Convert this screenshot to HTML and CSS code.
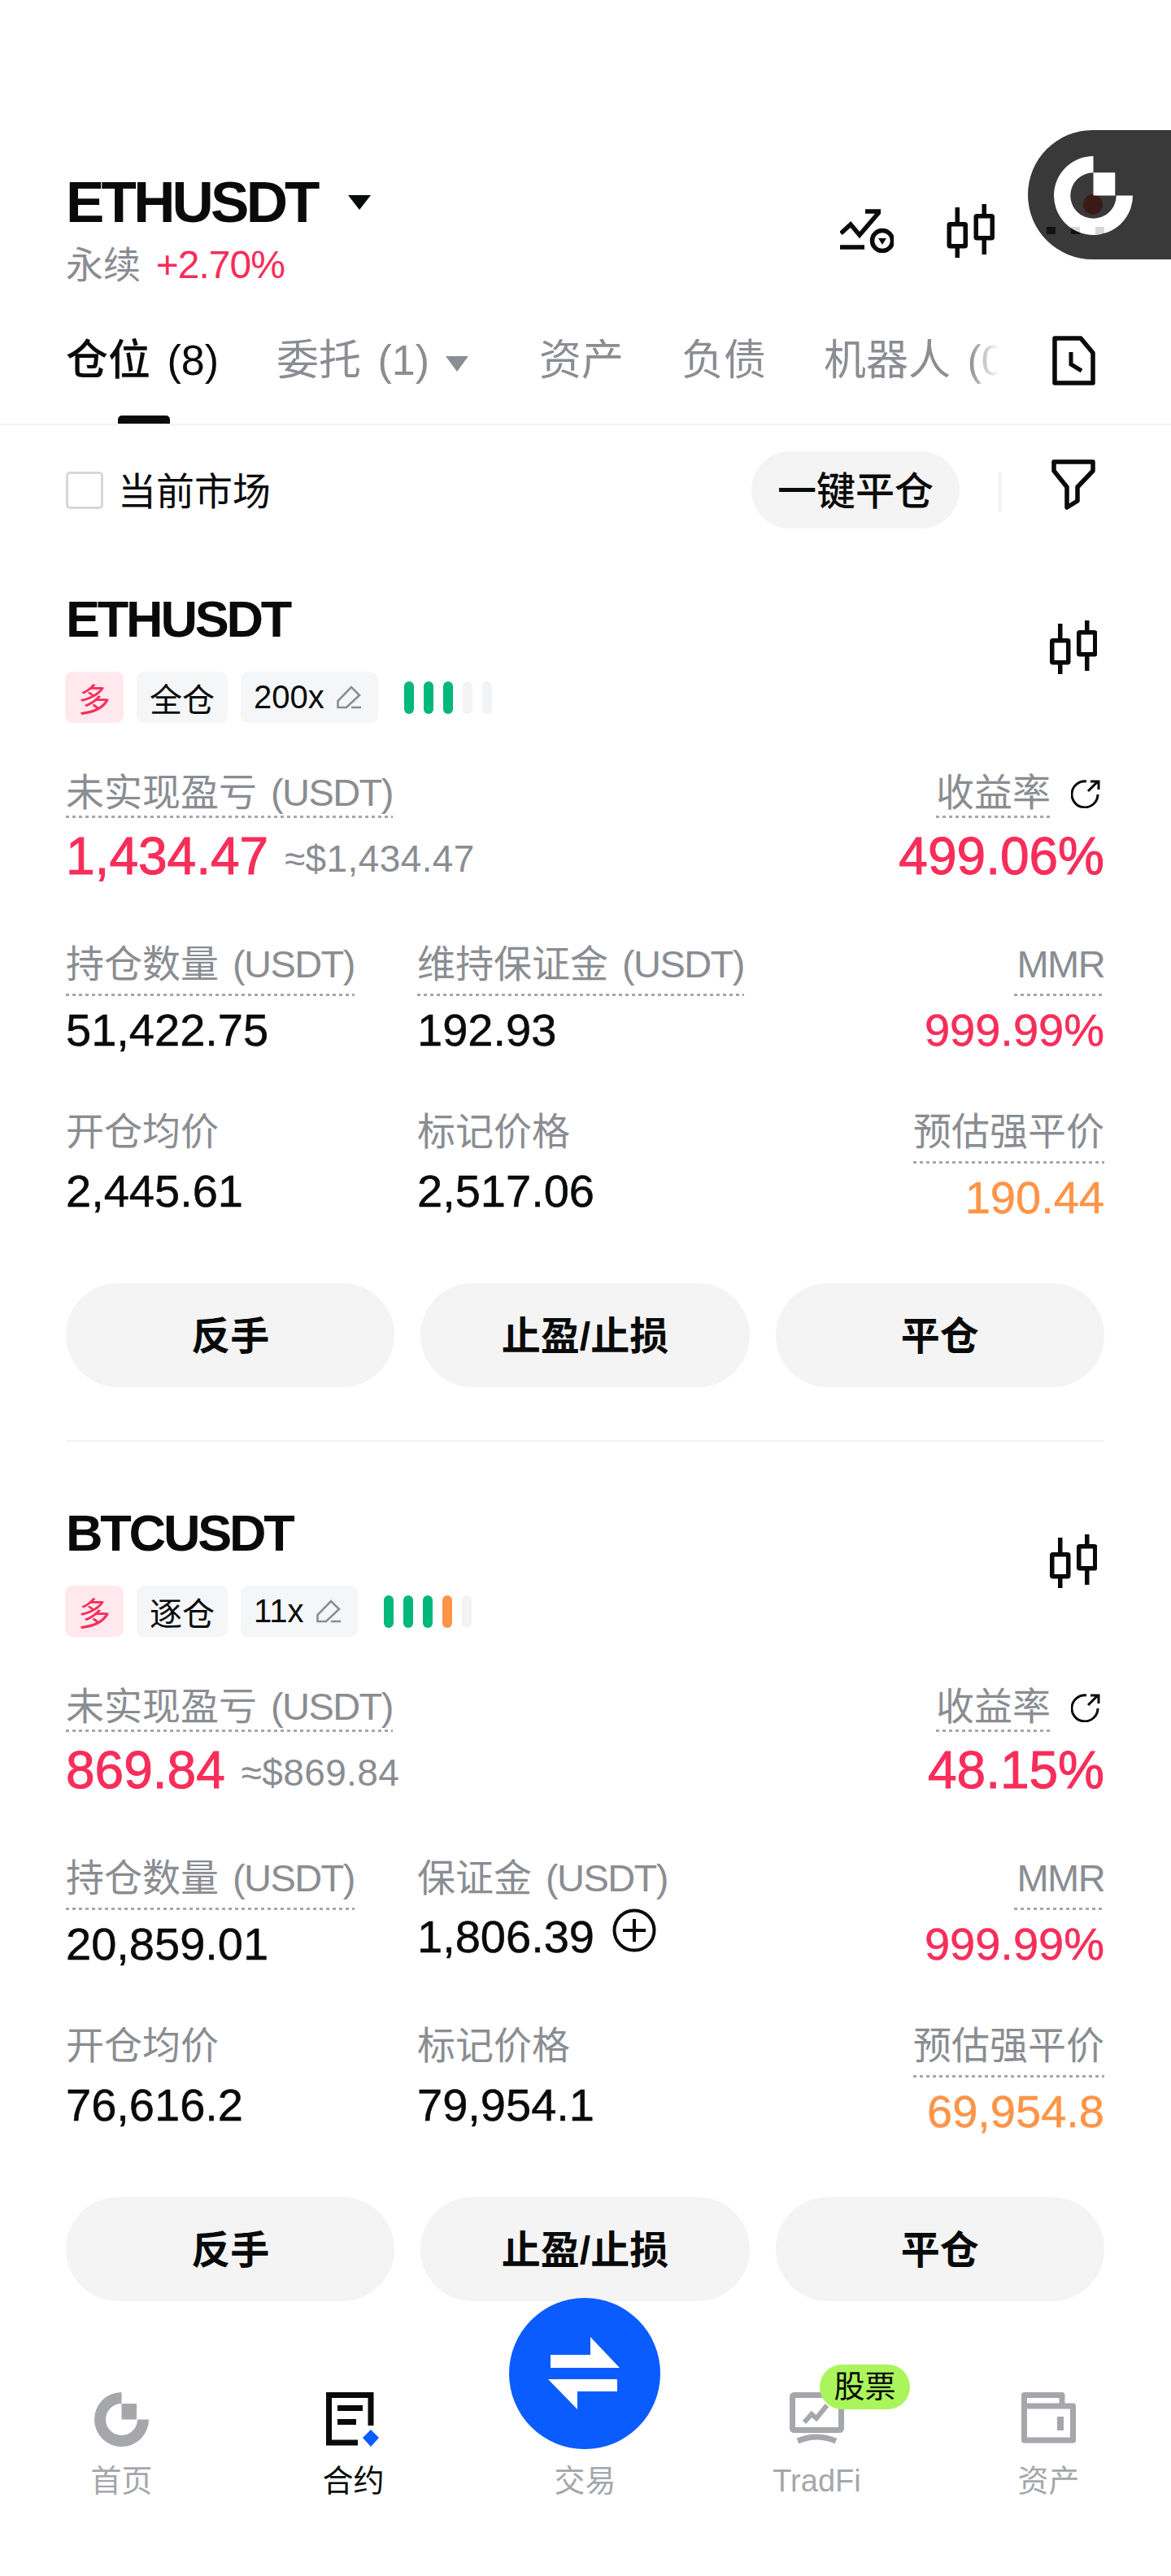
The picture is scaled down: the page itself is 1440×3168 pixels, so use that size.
FILE: index.html
```html
<!DOCTYPE html>
<html lang="zh-CN">

<head>
    <meta charset="UTF-8">
    <meta name="viewport" content="width=device-width, initial-scale=1.0">
    <title>ETHUSDT 仓位</title>
    <link rel="stylesheet" href="styles.css">
</head>

<body>
    <svg class="defs" width="0" height="0">
        <defs>
            <symbol id="candles" viewBox="0 0 58 66">
                <g fill="none" stroke="currentColor" stroke-width="5.5">
                    <rect x="2.75" y="24.75" width="20" height="27" rx="1"/>
                    <rect x="35.75" y="14.75" width="20" height="27" rx="1"/>
                    <path d="M12.75 4v20M12.75 52v14M45.75 0v14M45.75 42v20"/>
                </g>
            </symbol>
            <symbol id="logo" viewBox="0 0 67 67">
                <path fill="currentColor" d="M33.5 0A33.5 33.5 0 1 0 67 33.5H53A19.5 19.5 0 1 1 33.5 14ZM33.5 14H52V33.5H33.5Z"/>
            </symbol>
            <symbol id="pencil" viewBox="0 0 30 30">
                <path fill="none" stroke="currentColor" stroke-width="2.6" d="M1.5 27V19L18 2 28 12 12 27ZM18 27H30"/>
            </symbol>
            <symbol id="share" viewBox="0 0 36 36">
                <path fill="none" stroke="currentColor" stroke-width="3" d="M19 3A16 16 0 1 0 33 19M21 15 33 3M24 3H34V13"/>
            </symbol>
        </defs>
    </svg>

    <div class="page">
        <header class="market">
            <div class="market-top">
                <div>
                    <div class="market-name">
                        <h1>ETHUSDT</h1>
                        <span class="caret caret-lg"></span>
                    </div>
                    <div class="market-sub">永续 <span class="red">+2.70%</span></div>
                </div>
                <div class="market-tools">
                    <svg class="tool-chart" viewBox="0 0 66 54">
                        <g fill="none" stroke="currentColor" stroke-width="5.5">
                            <path d="M1 30 13 19 24 32 48 4M31 3H50M0 47H30"/>
                            <circle cx="52" cy="39" r="12.5"/>
                        </g>
                        <path fill="currentColor" d="M47 36H57L52 44Z"/>
                    </svg>
                    <svg class="tool-candles"><use href="#candles"/></svg>
                    <div class="tool-more"><i></i><i></i><i></i></div>
                </div>
            </div>
        </header>

        <!-- floating assistant button, the toolbar shows through it -->
        <span class="float-dot"></span>
        <div class="float-btn">
            <svg class="float-logo"><use href="#logo"/></svg>
        </div>

        <nav class="tabs">
            <div class="tabs-scroll">
                <span class="tab active">仓位 <em>(8)</em></span>
                <span class="tab tab-drop">委托 <em>(1)</em><span class="caret caret-sm"></span></span>
                <span class="tab">资产</span>
                <span class="tab">负债</span>
                <span class="tab">机器人 <em>(0)</em></span>
            </div>
            <svg class="tab-doc" viewBox="0 0 53 61">
                <path fill="none" stroke="currentColor" stroke-width="5.5" stroke-linejoin="round" d="M3 3H35L50 21V58H3Z"/>
                <path fill="none" stroke="currentColor" stroke-width="5" d="M23 20V35L36 43"/>
            </svg>
        </nav>

        <div class="filter-row">
            <label class="check"><span class="check-box"></span><span class="check-text">当前市场</span></label>
            <div class="filter-right">
                <button class="close-all">一键平仓</button>
                <span class="filter-sep"></span>
                <svg class="filter-icon" viewBox="0 0 54 62">
                    <path fill="none" stroke="currentColor" stroke-width="5.5" stroke-linejoin="round" d="M3 3H51V14L32 34V51L19 59V34L3 14Z"/>
                </svg>
            </div>
        </div>

        <section class="position">
            <div class="pos-head">
                <div>
                    <h2>ETHUSDT</h2>
                    <div class="tags">
                        <span class="tag tag-long">多</span>
                        <span class="tag">全仓</span>
                        <span class="tag">200x<svg class="pencil"><use href="#pencil"/></svg></span>
                        <div class="risk">
                            <i class="g"></i><i class="g"></i><i class="g"></i><i></i><i></i>
                        </div>
                    </div>
                </div>
                <svg class="pos-candles"><use href="#candles"/></svg>
            </div>

            <div class="pnl">
                <div>
                    <div class="lbl dotted pnl-lbl">未实现盈亏 <em>(USDT)</em></div>
                    <div class="pnl-val"><span class="red">1,434.47</span> <small>≈$1,434.47</small></div>
                </div>
                <div class="right">
                    <div class="pnl-rate"><span class="lbl dotted pnl-lbl">收益率</span><svg class="share"><use href="#share"/></svg></div>
                    <div class="pnl-val red">499.06%</div>
                </div>
            </div>

            <div class="stats">
                <div>
                    <div class="lbl dotted">持仓数量 <em>(USDT)</em></div>
                    <div class="val">51,422.75</div>
                </div>
                <div>
                    <div class="lbl dotted">维持保证金 <em>(USDT)</em></div>
                    <div class="val">192.93</div>
                </div>
                <div class="right">
                    <div class="lbl dotted"><em>MMR</em></div>
                    <div class="val red">999.99%</div>
                </div>
                <div class="row3">
                    <div class="lbl">开仓均价</div>
                    <div class="val">2,445.61</div>
                </div>
                <div class="row3">
                    <div class="lbl">标记价格</div>
                    <div class="val">2,517.06</div>
                </div>
                <div class="right row3">
                    <div class="lbl dotted">预估强平价</div>
                    <div class="val orange">190.44</div>
                </div>
            </div>

            <div class="actions">
                <button>反手</button>
                <button>止盈/止损</button>
                <button>平仓</button>
            </div>
        </section>

        <section class="position">
            <div class="pos-head">
                <div>
                    <h2>BTCUSDT</h2>
                    <div class="tags">
                        <span class="tag tag-long">多</span>
                        <span class="tag">逐仓</span>
                        <span class="tag">11x<svg class="pencil"><use href="#pencil"/></svg></span>
                        <div class="risk">
                            <i class="g"></i><i class="g"></i><i class="g"></i><i class="o"></i><i></i>
                        </div>
                    </div>
                </div>
                <svg class="pos-candles"><use href="#candles"/></svg>
            </div>

            <div class="pnl">
                <div>
                    <div class="lbl dotted pnl-lbl">未实现盈亏 <em>(USDT)</em></div>
                    <div class="pnl-val"><span class="red">869.84</span> <small>≈$869.84</small></div>
                </div>
                <div class="right">
                    <div class="pnl-rate"><span class="lbl dotted pnl-lbl">收益率</span><svg class="share"><use href="#share"/></svg></div>
                    <div class="pnl-val red">48.15%</div>
                </div>
            </div>

            <div class="stats">
                <div>
                    <div class="lbl dotted">持仓数量 <em>(USDT)</em></div>
                    <div class="val">20,859.01</div>
                </div>
                <div>
                    <div class="lbl">保证金 <em>(USDT)</em></div>
                    <div class="val val-margin">1,806.39
                        <svg class="plus" viewBox="0 0 54 54">
                            <g fill="none" stroke="currentColor" stroke-width="4">
                                <circle cx="27" cy="27" r="24.5"/>
                                <path d="M27 13V41M13 27H41"/>
                            </g>
                        </svg>
                    </div>
                </div>
                <div class="right">
                    <div class="lbl dotted"><em>MMR</em></div>
                    <div class="val red">999.99%</div>
                </div>
                <div class="row3">
                    <div class="lbl">开仓均价</div>
                    <div class="val">76,616.2</div>
                </div>
                <div class="row3">
                    <div class="lbl">标记价格</div>
                    <div class="val">79,954.1</div>
                </div>
                <div class="right row3">
                    <div class="lbl dotted">预估强平价</div>
                    <div class="val orange">69,954.8</div>
                </div>
            </div>

            <div class="actions">
                <button>反手</button>
                <button>止盈/止损</button>
                <button>平仓</button>
            </div>
        </section>

        <footer class="bottom-nav">
            <div class="nav-item">
                <svg class="nav-icon"><use href="#logo"/></svg>
                <span>首页</span>
            </div>
            <div class="nav-item active">
                <svg class="nav-icon" viewBox="0 0 67 67">
                    <path fill="none" stroke="currentColor" stroke-width="7" d="M39 62H3.5V3.500H55V41"/>
                    <path fill="currentColor" d="M14 16H45V23H14ZM14 33H37V40H14Z"/>
                    <path fill="#0a5cff" d="M55 46 65 56 55 67 45 56Z"/>
                </svg>
                <span>合约</span>
            </div>
            <div class="nav-item">
                <button class="trade-btn">
                    <svg viewBox="0 0 90 90">
                        <path fill="#fff" d="M3 22H52V0L88 38H3ZM0 52H85V67H36V89Z"/>
                    </svg>
                </button>
                <span class="nav-spacer"></span>
                <span>交易</span>
            </div>
            <div class="nav-item">
                <span class="nav-badge">股票</span>
                <svg class="nav-icon" viewBox="0 0 67 67">
                    <rect x="3.500" y="3.500" width="60" height="43" rx="2" fill="none" stroke="currentColor" stroke-width="7"/>
                    <path fill="none" stroke="currentColor" stroke-width="7" d="M10 60Q33 50 57 60"/>
                    <path fill="none" stroke="currentColor" stroke-width="6" d="M18 37 27 27 33 32 46 16"/>
                </svg>
                <span>TradFi</span>
            </div>
            <div class="nav-item">
                <svg class="nav-icon" viewBox="0 0 67 67">
                    <path fill="none" stroke="currentColor" stroke-width="7" stroke-linejoin="round" d="M3.500 17V3.500H50V17M3.500 17H63.500V59H3.500Z"/>
                    <path fill="currentColor" d="M44 30H52V47H44Z"/>
                </svg>
                <span>资产</span>
            </div>
        </footer>
    </div>
</body>

</html>
```

FILE: styles.css
```css
* {
    box-sizing: border-box;
}

body {
    margin: 0;
    background-color: #fff;
    color: #090a0a;
    font-family: "Liberation Sans", "Noto Sans CJK SC", sans-serif;
}

h1,
h2 {
    margin: 0;
}

em {
    font-style: normal;
}

button {
    border: 0;
    font-family: inherit;
    color: inherit;
}

.defs {
    position: absolute;
}

.page {
    position: relative;
    width: 1440px;
    height: 3168px;
    overflow: hidden;
}

.red {
    color: #f72d5a;
}

.orange {
    color: #ff9447;
}

.right {
    text-align: right;
}

/* market header */
.market {
    padding: 209px 82px 0 81px;
}

.market-top {
    display: flex;
    justify-content: space-between;
}

.market-name {
    display: flex;
    align-items: center;
    height: 80px;
}

.market-name h1 {
    font-size: 71px;
    line-height: 80px;
    letter-spacing: -3.8px;
}

.caret {
    display: inline-block;
    border-style: solid;
    border-color: currentColor transparent transparent transparent;
}

.caret-lg {
    margin-left: 38px;
    border-width: 18px 14px 0 14px;
}

.caret-sm {
    margin-left: 20px;
    border-width: 19px 14px 0 14px;
}

.market-sub {
    margin-top: 7px;
    font-size: 46px;
    line-height: 60px;
    color: #8a8d92;
}

.market-sub .red {
    margin-left: 6px;
    font-size: 48px;
    letter-spacing: -1px;
}

.market-tools {
    display: flex;
    height: 80px;
    margin-top: 42px;
    color: #090a0a;
}

.tool-chart {
    width: 66px;
    height: 54px;
    margin: 6px 65px 0 0;
}

.tool-candles {
    width: 59px;
    height: 66px;
}

.tool-more {
    display: flex;
    gap: 19px;
    margin: 28px 0 0 64px;
}

.tool-more i {
    width: 11px;
    height: 9px;
    background-color: #090a0a;
}

.float-dot {
    position: absolute;
    top: 239px;
    left: 1332px;
    width: 24px;
    height: 25px;
    border-radius: 50%;
    background-color: #ff3b1f;
}

.float-btn {
    position: absolute;
    top: 160px;
    left: 1264px;
    width: 176px;
    height: 159px;
    border-radius: 80px 0 0 80px;
    background-color: #141414;
    opacity: 0.84;
}

.float-logo {
    position: absolute;
    top: 32px;
    left: 32px;
    width: 97px;
    height: 97px;
    color: #fff;
}

/* tabs */
.tabs {
    display: flex;
    height: 110px;
    margin-top: 57px;
    padding-left: 81px;
    border-bottom: 2px solid #f2f3f4;
}

.tabs-scroll {
    position: relative;
    display: flex;
    gap: 71px;
    width: 1154px;
    overflow: hidden;
    white-space: nowrap;
}

.tabs-scroll::after {
    content: "";
    position: absolute;
    top: 0;
    right: 0;
    width: 44px;
    height: 100%;
    background: linear-gradient(to right, rgba(255, 255, 255, 0), #fff 85%);
}

.tab {
    position: relative;
    height: 108px;
    font-size: 52px;
    line-height: 60px;
    color: #8a8d92;
}

.tab em {
    margin-left: 6px;
}

.tab.active {
    color: #090a0a;
    font-weight: 500;
}

.tabs-scroll .active::after {
    content: "";
    position: absolute;
    left: 64px;
    bottom: 0;
    width: 64px;
    height: 10px;
    border-radius: 5px 5px 0 0;
    background-color: #090a0a;
}

.tab-drop {
    margin-right: 16px;
}

.tab-drop .caret-sm {
    vertical-align: 4px;
}

.tab-doc {
    width: 53px;
    height: 61px;
    margin-left: 59px;
    color: #090a0a;
}

/* filter row */
.filter-row {
    display: flex;
    align-items: center;
    justify-content: space-between;
    height: 127px;
    padding: 32px 82px 0 81px;
}

.check {
    display: flex;
    align-items: center;
    gap: 18px;
    font-size: 47px;
}

.check-text {
    margin-top: -5px;
}

.check-box {
    width: 46px;
    height: 46px;
    border: 3px solid #d5d7da;
    border-radius: 5px;
}

.filter-right {
    display: flex;
    align-items: center;
}

.close-all {
    width: 256px;
    height: 95px;
    padding: 0 0 5px;
    border-radius: 48px;
    background-color: #f4f4f4;
    font-size: 48px;
    font-weight: 500;
}

.filter-sep {
    width: 4px;
    height: 50px;
    margin: 5px 61px 0 48px;
    background-color: #f2f3f4;
}

.filter-icon {
    width: 54px;
    height: 62px;
    margin: -14px 11px 0 0;
}

/* position card */
.position {
    margin: 0 82px 0 81px;
    padding: 76px 0 65px;
    border-bottom: 2px solid #f2f3f4;
}

.position + .position {
    padding: 77px 0 0;
    border-bottom: 0;
}

.pos-head {
    display: flex;
    justify-content: space-between;
}

.pos-head h2 {
    font-size: 63px;
    line-height: 70px;
    letter-spacing: -3.2px;
}

.pos-candles {
    width: 58px;
    height: 66px;
    margin: 37px 9px 0 0;
}

.tags {
    display: flex;
    align-items: center;
    gap: 16px;
    margin: 30px 0 0 -1px;
}

.tag {
    display: flex;
    align-items: center;
    height: 63px;
    padding: 0 16px;
    border-radius: 9px;
    background-color: #f5f6f7;
    font-size: 40px;
}

.tag-long {
    background-color: #ffe9ee;
    color: #f72d5a;
}

.pencil {
    width: 30px;
    height: 30px;
    margin: 0 5px 0 15px;
    color: #8a8d92;
}

.risk {
    display: flex;
    gap: 12px;
    margin-left: 16px;
}

.risk i {
    width: 12px;
    height: 40px;
    border-radius: 6px;
    background-color: #f2f3f4;
}

.risk .g {
    background-color: #00b87a;
}

.risk .o {
    background-color: #ff9447;
}

.lbl {
    font-size: 47px;
    line-height: 56px;
    color: #8a8d92;
    padding-bottom: 3px;
}

.lbl em {
    margin-left: 4px;
    letter-spacing: -1.6px;
}

.dotted {
    display: inline-block;
    padding-bottom: 11px;
    background-image: repeating-linear-gradient(to right, #a5a7ab 0, #a5a7ab 4px, transparent 4px, transparent 8px);
    background-position: left bottom;
    background-repeat: repeat-x;
    background-size: 100% 3px;
}

.pnl {
    display: flex;
    justify-content: space-between;
    margin-top: 58px;
}

.pnl-lbl {
    padding-bottom: 3px;
}

.pnl-rate {
    display: flex;
    align-items: flex-start;
    justify-content: flex-end;
    gap: 25px;
}

.share {
    width: 36px;
    height: 36px;
    margin: 11px 5px 0 0;
}

.pnl-val {
    margin-top: 12px;
    font-size: 64px;
    line-height: 70px;
    -webkit-text-stroke: 1px currentColor;
}

.pnl-val small {
    margin-left: 2px;
    font-size: 46px;
    letter-spacing: 0.4px;
    vertical-align: 3px;
    color: #8a8d92;
    -webkit-text-stroke: 0;
}

.stats {
    display: grid;
    grid-template-columns: 432px 1fr auto;
    margin-top: 67px;
}

.row3 {
    margin-top: 67px;
}

.val {
    margin-top: 12px;
    font-size: 56px;
    line-height: 60px;
    -webkit-text-stroke: 0.5px currentColor;
}

.val-margin {
    margin-top: 6px;
}

.plus {
    width: 54px;
    height: 54px;
    margin-left: 6px;
}

.actions {
    display: grid;
    grid-template-columns: repeat(3, 1fr);
    gap: 32px;
    margin-top: 75px;
}

.actions button {
    height: 128px;
    padding: 0 0 7px;
    border-radius: 64px;
    background-color: #f4f4f4;
    font-size: 48px;
    font-weight: 700;
}

/* bottom nav */
.bottom-nav {
    position: relative;
    display: grid;
    grid-template-columns: repeat(5, 285px);
    height: 342px;
    padding: 112px 7px 0;
    background-color: #fff;
}

.nav-item {
    position: relative;
    display: flex;
    flex-direction: column;
    align-items: center;
    gap: 19px;
    font-size: 38px;
    line-height: 46px;
    color: #a5a7ab;
}

.nav-item.active {
    color: #090a0a;
}

.nav-icon {
    width: 67px;
    height: 67px;
}

.nav-spacer {
    height: 67px;
}

.trade-btn {
    position: absolute;
    top: -116px;
    left: 49px;
    display: flex;
    align-items: center;
    justify-content: center;
    width: 186px;
    height: 186px;
    padding: 0;
    border-radius: 50%;
    background-color: #0a5cff;
}

.trade-btn svg {
    width: 90px;
    height: 90px;
}

.nav-badge {
    position: absolute;
    top: -34px;
    left: 146px;
    width: 111px;
    height: 55px;
    border-radius: 28px;
    background-color: #a9f55b;
    color: #090a0a;
    text-align: center;
    line-height: 55px;
    z-index: 1;
}
```
